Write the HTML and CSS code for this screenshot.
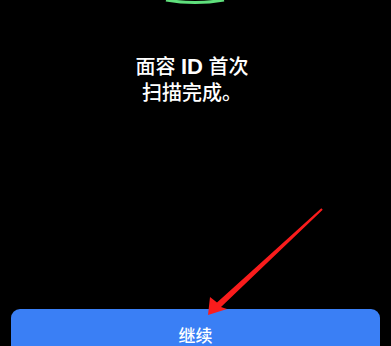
FILE: index.html
```html
<!DOCTYPE html>
<html lang="zh-CN">
<head>
    <meta charset="UTF-8">
    <meta name="viewport" content="width=device-width, initial-scale=1.0">
    <title>面容 ID</title>
    <link rel="stylesheet" href="styles.css">
</head>
<body>
    <div class="screen">
        <svg class="ring" width="391" height="6" viewBox="0 0 391 6">
            <path d="M166 0 Q195 5 224 0" fill="none" stroke="#5fe07c" stroke-width="3"/>
        </svg>
        <h1 class="title">面容 <b>ID</b> 首次<br>扫描完成。</h1>
        <div class="spacer"></div>
        <button class="continue">继续</button>
        <svg class="arrow" width="391" height="346" viewBox="0 0 391 346">
            <polygon points="208,315 210,297 217,302.6 321.3,208.3 322.7,209.7 221,307 227,309" fill="#fa1c1c"/>
        </svg>
    </div>
</body>
</html>
```

FILE: styles.css
```css
body{
    margin: 0;
    background-color: #000;
    font-family: "Noto Sans CJK SC", "Noto Sans", sans-serif;
}
.screen{
    position: relative;
    width: 391px;
    height: 346px;
    overflow: hidden;
    display: flex;
    flex-direction: column;
}
.ring{
    display: block;
}
.title{
    margin: 47px 0 0;
    padding-right: 7px;
    color: #fff;
    font-size: 20px;
    font-weight: 500;
    line-height: 25px;
    text-align: center;
}
.title b{
    font-family: "Liberation Sans", sans-serif;
    font-size: 22px;
    font-weight: 700;
    margin: 0 1px;
}
.spacer{
    flex: 1;
}
.continue{
    flex: none;
    margin: 0 11px -13px;
    height: 50px;
    border: 0;
    border-radius: 9px;
    background-color: #3a7ff5;
    color: #fff;
    font-family: "Noto Sans CJK SC", sans-serif;
    font-size: 17px;
    font-weight: 500;
}
.arrow{
    position: absolute;
    left: 0;
    top: 0;
}
```
